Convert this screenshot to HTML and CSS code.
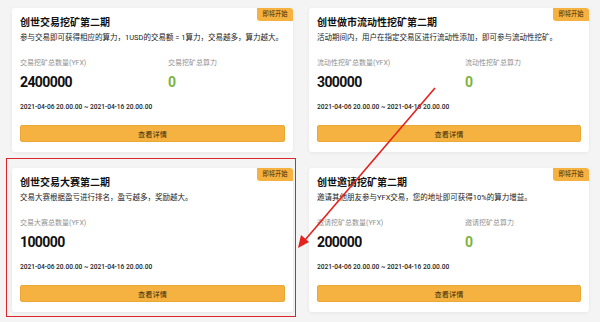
FILE: index.html
```html
<!DOCTYPE html>
<html lang="zh-CN">
  <head>
    <meta charset="UTF-8" />
    <meta name="viewport" content="width=device-width, initial-scale=1.0" />
    <title>创世挖矿第二期</title>
    <link rel="stylesheet" href="styles.css">
  </head>

  <body>
    <main class="grid">
      <!-- 交易挖矿 -->
      <div class="card">
        <span class="badge">即将开始</span>
        <h3 class="title">创世交易挖矿第二期</h3>
        <p class="desc">参与交易即可获得相应的算力，1USD的交易额 = 1算力，交易越多，算力越大。</p>
        <div class="stats">
          <div>
            <p class="label">交易挖矿总数量(YFX)</p>
            <p class="value">2400000</p>
          </div>
          <div>
            <p class="label">交易挖矿总算力</p>
            <p class="value green">0</p>
          </div>
        </div>
        <p class="date">2021-04-06 20.00.00 ~ 2021-04-16 20.00.00</p>
        <button class="btn">查看详情</button>
      </div>

      <!-- 流动性挖矿 -->
      <div class="card">
        <span class="badge">即将开始</span>
        <h3 class="title">创世做市流动性挖矿第二期</h3>
        <p class="desc">活动期间内，用户在指定交易区进行流动性添加，即可参与流动性挖矿。</p>
        <div class="stats">
          <div>
            <p class="label">流动性挖矿总数量(YFX)</p>
            <p class="value">300000</p>
          </div>
          <div>
            <p class="label">流动性挖矿总算力</p>
            <p class="value green">0</p>
          </div>
        </div>
        <p class="date">2021-04-06 20.00.00 ~ 2021-04-16 20.00.00</p>
        <button class="btn">查看详情</button>
      </div>

      <!-- 交易大赛 -->
      <div class="card">
        <span class="badge">即将开始</span>
        <h3 class="title">创世交易大赛第二期</h3>
        <p class="desc">交易大赛根据盈亏进行排名，盈亏越多，奖励越大。</p>
        <div class="stats">
          <div>
            <p class="label">交易大赛总数量(YFX)</p>
            <p class="value">100000</p>
          </div>
        </div>
        <p class="date">2021-04-06 20.00.00 ~ 2021-04-16 20.00.00</p>
        <button class="btn">查看详情</button>
      </div>

      <!-- 邀请挖矿 -->
      <div class="card">
        <span class="badge">即将开始</span>
        <h3 class="title">创世邀请挖矿第二期</h3>
        <p class="desc">邀请其他朋友参与YFX交易，您的地址即可获得10%的算力增益。</p>
        <div class="stats">
          <div>
            <p class="label">邀请挖矿总数量(YFX)</p>
            <p class="value">200000</p>
          </div>
          <div>
            <p class="label">邀请挖矿总算力</p>
            <p class="value green">0</p>
          </div>
        </div>
        <p class="date">2021-04-06 20.00.00 ~ 2021-04-16 20.00.00</p>
        <button class="btn">查看详情</button>
      </div>
    </main>

    <!-- annotation -->
    <div class="mark"></div>
    <svg class="arrow" width="600" height="322" viewBox="0 0 600 322">
      <line x1="435" y1="88" x2="305" y2="240" stroke="#e4211c" stroke-width="1.6" />
      <polygon points="298,248 301,235 309,242" fill="#e4211c" />
    </svg>
  </body>
</html>
```

FILE: styles.css
```css
* {
  margin: 0px;
  padding: 0px;
  box-sizing: border-box;
}
body {
  background-color: #f4f4f4;
  font-family: Roboto, "Noto Sans CJK SC", sans-serif;
  color: #151515;
  width: 600px;
  height: 322px;
  overflow: hidden;
  position: relative;
}

.grid {
  display: grid;
  grid-template-columns: 281px 280px;
  gap: 16px;
  padding: 8px 11px 11px 12px;
}

.card {
  position: relative;
  height: 144px;
  padding: 8px 8px 9px 8px;
  background-color: white;
  border-radius: 3px;
  box-shadow: 0px 1px 4px rgba(0, 0, 0, 0.06);
}

.badge {
  position: absolute;
  top: 0px;
  right: 0px;
  width: 36px;
  height: 13px;
  line-height: 13px;
  text-align: center;
  font-size: 6.3px;
  color: #3a2a08;
  background-color: #f5b240;
  border-radius: 0px 3px 0px 3px;
}

.title {
  font-size: 10px;
  line-height: 14px;
  font-weight: 700;
  color: #111;
}

.desc {
  margin-top: 3px;
  font-size: 7.5px;
  line-height: 10px;
  white-space: nowrap;
  color: #222;
}

.stats {
  display: grid;
  grid-template-columns: 148px 1fr;
  margin-top: 15px;
}

.label {
  font-size: 7px;
  line-height: 10px;
  color: #909090;
}

.value {
  margin-top: 5px;
  font-size: 14px;
  line-height: 18px;
  font-weight: 700;
  letter-spacing: -0.6px;
  color: #111;
}

.green {
  color: #7cb342;
}

.date {
  margin-top: 11px;
  font-size: 6.6px;
  line-height: 10px;
  font-weight: 500;
  color: #222;
}

.btn {
  display: block;
  width: 100%;
  height: 17px;
  margin-top: 13px;
  font-family: Roboto, "Noto Sans CJK SC", sans-serif;
  font-size: 7.2px;
  color: #3a2a08;
  background-color: #f5b240;
  border: 1px solid #eda834;
  border-radius: 2px;
}

.mark {
  position: absolute;
  left: 6px;
  top: 158px;
  width: 290px;
  height: 159px;
  border: 1.5px solid #d9262b;
}

.arrow {
  position: absolute;
  left: 0px;
  top: 0px;
  pointer-events: none;
}
```
